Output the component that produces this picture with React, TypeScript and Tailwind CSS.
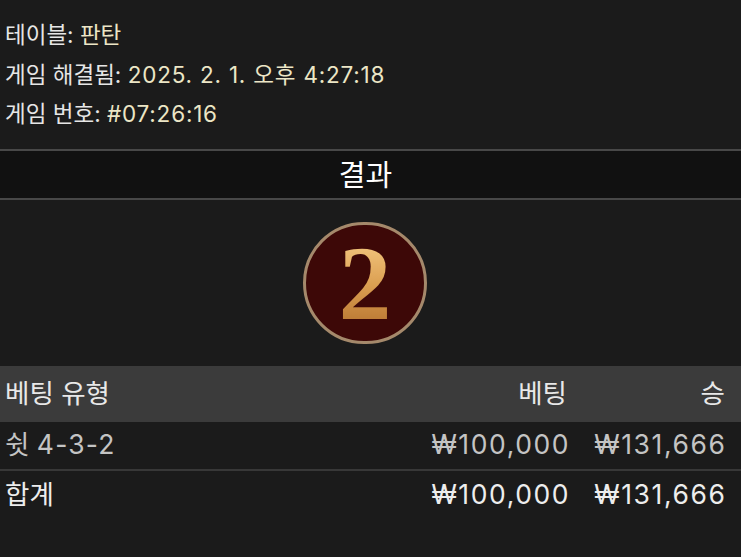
import React from "react";

const font = { fontFamily: 'Inter, "Noto Sans CJK KR", sans-serif' };

export default function App() {
  return (
    <div className="w-[741px] h-[557px] bg-[#1b1b1b] overflow-hidden" style={font}>
      <div className="pt-[15px] pb-[15px] px-[5px] text-[22.5px] leading-[39.5px] text-[#e6e6e6]">
        <div>
          테이블: <span className="text-[#ece6c6]">판탄</span>
        </div>
        <div>
          게임 해결됨: <span className="text-[#ece6c6] tracking-[0.8px]">2025. 2. 1. 오후 4:27:18</span>
        </div>
        <div>
          게임 번호: <span className="text-[#ece6c6] tracking-[0.8px]">#07:26:16</span>
        </div>
      </div>
      <div className="border-t-[2px] border-b-[2px] border-[#484848] bg-[#111111] h-[51px] flex items-center justify-center pr-[10px] pt-[4px] text-[29px] text-white">
        결과
      </div>
      <div className="flex justify-center pr-[11px] py-[22px]">
        <div className="w-[124px] h-[122px] rounded-full border-[3px] border-[#a5896b] bg-[#3d0807] flex items-center justify-center">
          <span
            className="font-bold text-[106px] leading-none mt-[2px] bg-gradient-to-b from-[#f8d08a] via-[#dca052] to-[#b06c2a] bg-clip-text text-transparent"
            style={{ fontFamily: '"Liberation Serif", serif' }}
          >
            2
          </span>
        </div>
      </div>
      <div className="h-[56px] bg-[#3b3b3b] flex items-center pl-[5px] pr-[16px] text-[26.5px] text-[#e8e8e8]">
        <div className="flex-1">베팅 유형</div>
        <div className="text-right">베팅</div>
        <div className="w-[158px] text-right">승</div>
      </div>
      <div className="h-[47px] flex items-center pl-[5px] pr-[16px] text-[26.5px] text-[#c4c4c4] border-b-[2px] border-[#383838] box-content">
        <div className="flex-1">쉿 <span className="tracking-[1.2px]">4-3-2</span></div>
        <div className="text-right tracking-[1.6px] mr-[-1.6px]">₩100,000</div>
        <div className="w-[158px] text-right tracking-[1.6px] mr-[-1.6px]">₩131,666</div>
      </div>
      <div className="h-[48px] flex items-center pl-[5px] pr-[16px] text-[26.5px] text-[#ededed]">
        <div className="flex-1">합계</div>
        <div className="text-right tracking-[1.6px] mr-[-1.6px]">₩100,000</div>
        <div className="w-[158px] text-right tracking-[1.6px] mr-[-1.6px]">₩131,666</div>
      </div>
    </div>
  );
}
